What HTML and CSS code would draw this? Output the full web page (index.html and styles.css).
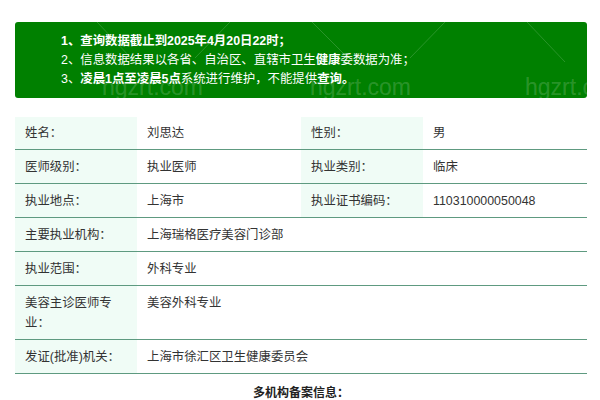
FILE: index.html
```html
<!DOCTYPE html>
<html lang="zh-CN">
<head>
<meta charset="utf-8">
<title>医师执业信息</title>
<link rel="stylesheet" href="styles.css">
</head>
<body>
<div class="page">
  <div class="notice">
    <p class="bold">1、查询数据截止到2025年4月20日22时；</p>
    <p>2、信息数据结果以各省、自治区、直辖市卫生<b>健康</b>委数据为准；</p>
    <p>3、<b>凌晨1点至凌晨5点</b>系统进行维护，不能提供<b>查询。</b></p>
    <svg class="wm-lines" width="572" height="76" viewBox="0 0 572 76">
      <line x1="82" y1="0" x2="116" y2="36" />
      <line x1="215" y1="0" x2="180" y2="36" />
      <line x1="297" y1="0" x2="333" y2="36" />
      <line x1="430" y1="0" x2="395" y2="36" />
      <line x1="512" y1="0" x2="550" y2="40" />
    </svg>
    <span class="wm wm1">hgzrt.com</span>
    <span class="wm wm2">hgzrt.com</span>
    <span class="wm wm3">hgzrt.com</span>
  </div>

  <table class="info">
    <colgroup>
      <col class="c-label"><col class="c-value"><col class="c-label"><col class="c-value">
    </colgroup>
    <tr>
      <th>姓名：</th><td>刘思达</td>
      <th>性别：</th><td>男</td>
    </tr>
    <tr>
      <th>医师级别：</th><td>执业医师</td>
      <th>执业类别：</th><td>临床</td>
    </tr>
    <tr>
      <th>执业地点：</th><td>上海市</td>
      <th>执业证书编码：</th><td>110310000050048</td>
    </tr>
    <tr>
      <th>主要执业机构：</th><td colspan="3">上海瑞格医疗美容门诊部</td>
    </tr>
    <tr>
      <th>执业范围：</th><td colspan="3">外科专业</td>
    </tr>
    <tr>
      <th>美容主诊医师专业：</th><td colspan="3">美容外科专业</td>
    </tr>
    <tr>
      <th>发证(批准)机关：</th><td colspan="3">上海市徐汇区卫生健康委员会</td>
    </tr>
  </table>

  <h3 class="subtitle">多机构备案信息：</h3>
</div>
</body>
</html>
```

FILE: styles.css
```css
html, body {
  margin: 0;
  padding: 0;
  background: #ffffff;
}

body {
  font-family: "Liberation Sans", "Noto Sans CJK SC", sans-serif;
  font-size: 12.4px;
  color: #333333;
}

.page {
  padding: 22px 13px 0 15px;
}

.notice {
  position: relative;
  overflow: hidden;
  background: #008000;
  color: #ffffff;
  border-radius: 3px;
  padding: 10px 20px 9px 46px;
  line-height: 19px;
  height: 57px;
}

.notice p {
  margin: 0;
  position: relative;
  z-index: 2;
}

.notice .bold,
.notice b {
  font-weight: 700;
}

.wm-lines {
  position: absolute;
  left: 0;
  top: 0;
  z-index: 1;
}

.wm-lines line {
  stroke: rgba(255, 255, 255, 0.16);
  stroke-width: 1;
}

.wm {
  position: absolute;
  z-index: 1;
  font-family: "Liberation Sans", Arial, sans-serif;
  font-size: 23px;
  color: rgba(255, 255, 255, 0.18);
  top: 52px;
  line-height: 26px;
}

.wm1 { left: 87px; }
.wm2 { left: 295px; }
.wm3 { left: 510px; }

.info {
  width: 572px;
  margin-top: 19px;
  border-collapse: collapse;
  table-layout: fixed;
}

.c-label { width: 122px; }
.c-value { width: 164px; }

.info th,
.info td {
  padding: 7px 14px 6px 10px;
  line-height: 20px;
  text-align: left;
  vertical-align: top;
  font-weight: 400;
  border-bottom: 1px solid #5e9a80;
}

.info tr:first-child th,
.info tr:first-child td {
  padding-top: 6px;
}

.info th {
  background: #f0fcf6;
  color: #333333;
}

.info td {
  background: #ffffff;
  color: #333333;
}

.subtitle {
  margin: 9px 0 0;
  text-align: center;
  font-size: 12px;
  font-weight: 700;
  line-height: 20px;
  color: #222222;
}
```
